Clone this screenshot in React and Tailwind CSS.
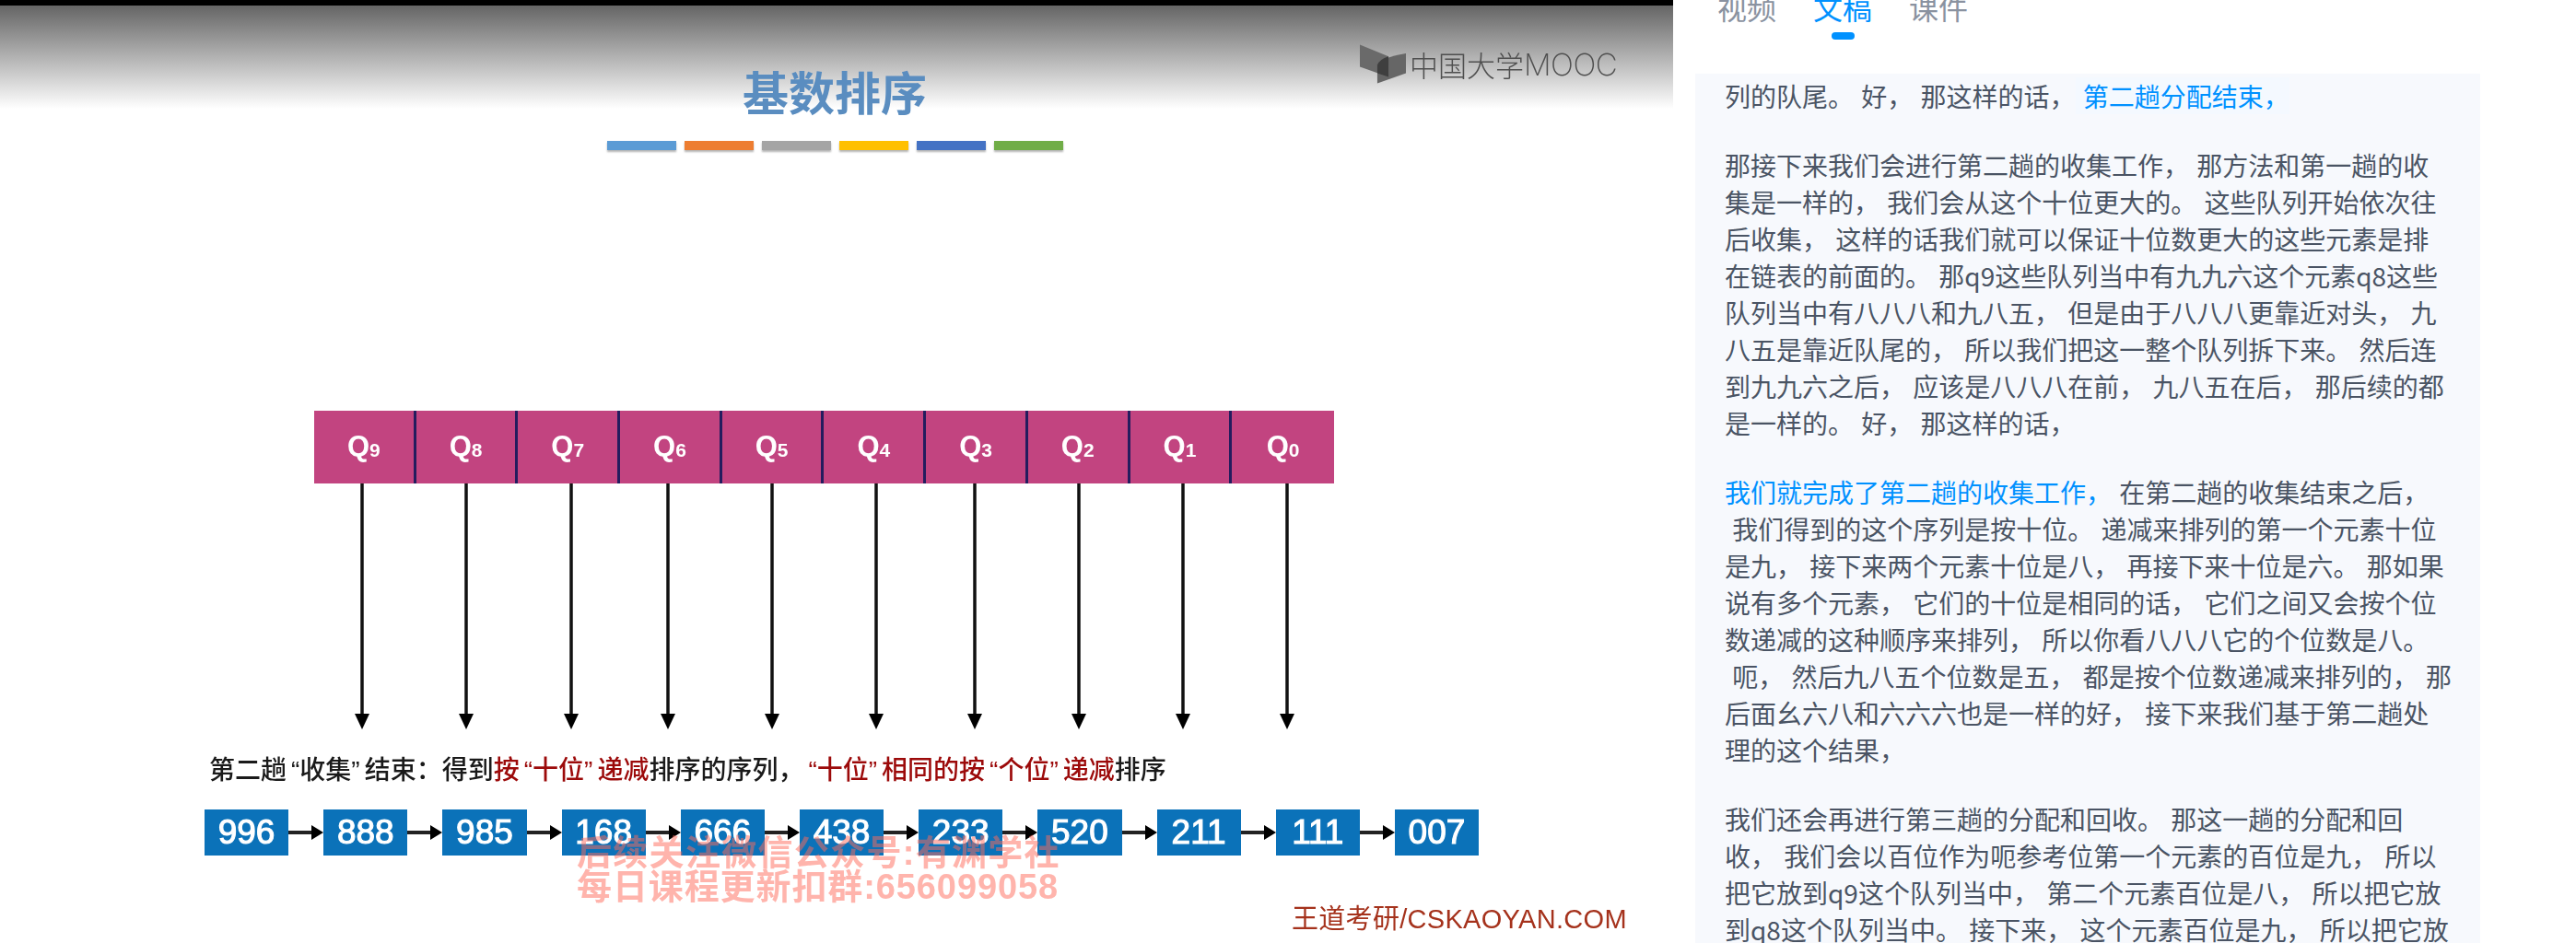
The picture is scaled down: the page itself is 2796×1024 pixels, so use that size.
import React from "react";

const CJK = "font-['Noto_Sans_CJK_SC','Noto_Sans',sans-serif]";
const LATIN = "font-['Liberation_Sans','Noto_Sans_CJK_SC',sans-serif]";

const bars = ["bg-[#5b9bd5]", "bg-[#ed7d31]", "bg-[#a5a5a5]", "bg-[#ffc000]", "bg-[#4472c4]", "bg-[#70ad47]"];
const queues = [9, 8, 7, 6, 5, 4, 3, 2, 1, 0];
const arrowX = [52, 165, 279, 384, 497, 610, 717, 830, 943, 1056];
const values = ["996", "888", "985", "168", "666", "438", "233", "520", "211", "111", "007"];

const paragraphs = [
  [[" ", "列的队尾。 好， 那这样的话，", "第二趟分配结束，"]],
  [
    "那接下来我们会进行第二趟的收集工作， 那方法和第一趟的收",
    "集是一样的， 我们会从这个十位更大的。 这些队列开始依次往",
    "后收集， 这样的话我们就可以保证十位数更大的这些元素是排",
    "在链表的前面的。 那q9这些队列当中有九九六这个元素q8这些",
    "队列当中有八八八和九八五， 但是由于八八八更靠近对头， 九",
    "八五是靠近队尾的， 所以我们把这一整个队列拆下来。 然后连",
    "到九九六之后， 应该是八八八在前， 九八五在后， 那后续的都",
    "是一样的。 好， 那这样的话，",
  ],
  [
    [null, null, "我们就完成了第二趟的收集工作，", " 在第二趟的收集结束之后，"],
    " 我们得到的这个序列是按十位。 递减来排列的第一个元素十位",
    "是九， 接下来两个元素十位是八， 再接下来十位是六。 那如果",
    "说有多个元素， 它们的十位是相同的话， 它们之间又会按个位",
    "数递减的这种顺序来排列， 所以你看八八八它的个位数是八。",
    " 呃， 然后九八五个位数是五， 都是按个位数递减来排列的， 那",
    "后面幺六八和六六六也是一样的好， 接下来我们基于第二趟处",
    "理的这个结果，",
  ],
  [
    "我们还会再进行第三趟的分配和回收。 那这一趟的分配和回",
    "收， 我们会以百位作为呃参考位第一个元素的百位是九， 所以",
    "把它放到q9这个队列当中， 第二个元素百位是八， 所以把它放",
    "到q8这个队列当中。 接下来， 这个元素百位是九， 所以把它放",
  ],
];

function Line({ line }) {
  if (typeof line === "string") return <div className="h-[40px] whitespace-pre">{line}</div>;
  if (line[0] === " ") {
    return (
      <div className="h-[40px] whitespace-pre">
        {line[1]}
        <span className="bg-[#f4f9ff] text-[#0091ff]"> {line[2]}</span>
      </div>
    );
  }
  return (
    <div className="h-[40px] whitespace-pre">
      <span className="text-[#0091ff]">{line[2]}</span>
      {line[3]}
    </div>
  );
}

function Q({ children }) {
  return <span className="pl-[5px]">“{children}”<span className="pl-[5px]" /></span>;
}

function Logo() {
  return (
    <div className="absolute left-[1476px] top-[42px] flex items-center text-[#4f4f4f]">
      <svg width="50" height="44" viewBox="50 28 145 125" className="mr-[4px]">
        <polygon points="50,28 140,65 140,130 50,98" fill="#6a6a6a" />
        <path d="M105 150 L105 92 Q115 70 195 56 L195 118 Z" fill="#666666" />
        <path d="M105 92 Q112 74 140 65 L140 130 L105 118 Z" fill="#3f3f3f" />
      </svg>
      <span className={`${CJK} text-[31px] leading-[44px] font-light`}>中国大学</span>
      <span className="font-['Inter',sans-serif] text-[33px] leading-[44px] font-extralight tracking-[-0.5px]">MOOC</span>
    </div>
  );
}

function Slide() {
  return (
    <div className="relative flex h-[1018px] flex-col bg-[linear-gradient(#656565_0px,#ffffff_112px)] blur-[0.6px]">
      <div className="flex w-[1812px] flex-col items-center">
        <h1 className={`${CJK} mt-[63px] h-[59px] text-[50px] leading-[59px] font-bold text-[#5a8dc0]`}>基数排序</h1>
        <div className="mt-[25px] flex gap-[9px]">
          {bars.map((c) => (
            <div key={c} className={`h-[10px] w-[75px] ${c} shadow-[0_2px_2px_rgba(0,0,0,0.3)]`} />
          ))}
        </div>
      </div>

      <div className="mt-[283px] ml-[341px] grid h-[79px] w-[1107px] grid-cols-10 bg-[#c24480]">
        {queues.map((q, i) => (
          <div
            key={q}
            className={`flex items-center justify-center pb-[2px] text-white ${LATIN} font-bold ${i < 9 ? "border-r-[3px] border-[#241c5e]" : ""}`}
          >
            <span className="text-[31px] leading-none">Q</span>
            <span className="mt-[8px] text-[21px] leading-none">{q}</span>
          </div>
        ))}
      </div>

      <svg width="1107" height="267" className="ml-[341px] block">
        {arrowX.map((x) => (
          <g key={x}>
            <line x1={x} y1="0" x2={x} y2="252" stroke="#111" strokeWidth="3.5" />
            <polygon points={`${x - 8},250 ${x + 8},250 ${x},267`} fill="#000" />
          </g>
        ))}
      </svg>

      <div className={`${LATIN} mt-[27px] ml-[227px] h-[36px] text-[28px] leading-[36px] font-medium whitespace-pre text-[#1a1a1a]`}>
        第二趟<Q>收集</Q>结束：得到<span className="text-[#9c0a0a]">按<Q>十位</Q>递减</span>排序的序列，
        <span className="text-[#9c0a0a]"><Q>十位</Q>相同的按<Q>个位</Q>递减</span>排序
      </div>

      <div className="mt-[24px] ml-[222px] flex h-[50px] items-center">
        {values.map((v, i) => (
          <React.Fragment key={v}>
            <div className={`flex h-[50px] w-[91.2px] items-center justify-center bg-[#0b72b9] ${LATIN} text-[37px] font-normal text-white [-webkit-text-stroke:1.1px_#ffffff]`}>
              {v}
            </div>
            {i < values.length - 1 && (
              <svg width="38" height="20" className="block">
                <line x1="0" y1="10" x2="28" y2="10" stroke="#222" strokeWidth="4" />
                <polygon points="25,2 38,10 25,18" fill="#000" />
              </svg>
            )}
          </React.Fragment>
        ))}
      </div>

      <div className={`${LATIN} mt-[51px] ml-[1402px] h-[36px] text-[29px] leading-[36px] tracking-[0.3px] whitespace-nowrap text-[#a5321c]`}>
        王道考研/CSKAOYAN.COM
      </div>

      <Logo />

      <div className={`${LATIN} absolute top-[902px] left-[626px] text-[38px] leading-[37px] font-bold whitespace-nowrap text-[#ff6a5a]/50`}>
        <div className="tracking-[1.3px]">后续关注微信公众号:有渊学社</div>
        <div className="tracking-[0.9px]">每日课程更新扣群:656099058</div>
      </div>
    </div>
  );
}

function Transcript() {
  return (
    <div className={`ml-[24px] w-[852px] flex-1 overflow-hidden bg-[#f7f9fd] pt-[4px] pl-[32px] ${CJK} text-[28px] leading-[40px] [word-spacing:2px] text-[#4a5464]`}>
      {paragraphs.map((p, i) => (
        <div key={i} className="mb-[35px]">
          {p.map((l, j) => (
            <Line key={j} line={l} />
          ))}
        </div>
      ))}
    </div>
  );
}

export default function App() {
  return (
    <div className="flex h-[1024px] w-[2796px] overflow-hidden bg-white">
      <div className="flex w-[1816px] flex-col overflow-hidden">
        <div className="h-[6px] shrink-0 bg-black" />
        <Slide />
      </div>
      <div className="flex flex-1 flex-col overflow-hidden">
        <div className={`-mt-[13px] ml-[48px] flex h-[93px] shrink-0 gap-[40px] ${CJK} text-[32px] leading-[40px]`}>
          <div className="text-[#8a92a0]">视频</div>
          <div className="flex flex-col items-center text-[#0091ff]">
            <span className="h-[40px]">文稿</span>
            <span className="mt-[8px] h-[8px] w-[25px] rounded-full bg-[#0091ff]" />
          </div>
          <div className="text-[#8a92a0]">课件</div>
        </div>
        <Transcript />
      </div>
    </div>
  );
}
